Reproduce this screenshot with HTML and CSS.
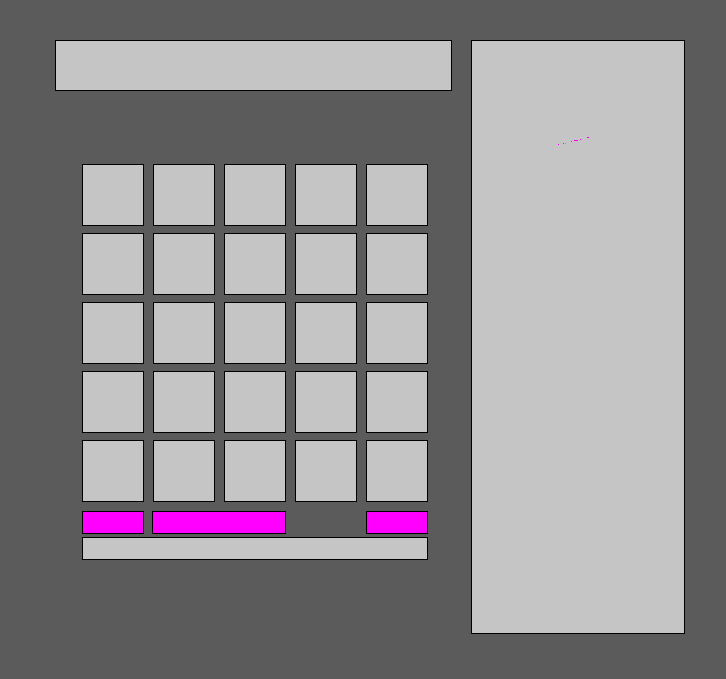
FILE: index.html
```html
<!doctype html>
<html lang="en">

<head>
    <meta charset="utf-8">
    <meta name="viewport" content="width=device-width, initial-scale=1.0">
    <link rel="stylesheet" href="styles.css">
</head>

<body>
    <div class="screen">
        <div class="left">
            <div class="display"></div>

            <div class="pad">
                <div class="cell"></div>
                <div class="cell"></div>
                <div class="cell"></div>
                <div class="cell"></div>
                <div class="cell"></div>
                <div class="cell"></div>
                <div class="cell"></div>
                <div class="cell"></div>
                <div class="cell"></div>
                <div class="cell"></div>
                <div class="cell"></div>
                <div class="cell"></div>
                <div class="cell"></div>
                <div class="cell"></div>
                <div class="cell"></div>
                <div class="cell"></div>
                <div class="cell"></div>
                <div class="cell"></div>
                <div class="cell"></div>
                <div class="cell"></div>
                <div class="cell"></div>
                <div class="cell"></div>
                <div class="cell"></div>
                <div class="cell"></div>
                <div class="cell"></div>
            </div>

            <div class="controls">
                <div class="btn btn_a"></div>
                <div class="btn btn_wide"></div>
                <div class="btn btn_b"></div>
            </div>
            <div class="bar"></div>
        </div>

        <div class="panel">
            <svg class="trace" width="40" height="12" viewBox="0 0 40 12">
                <rect x="2" y="8" width="1" height="1" fill="#ff00ff" />
                <rect x="7" y="7" width="1" height="1" fill="#ff00ff" />
                <rect x="9" y="7" width="1" height="1" fill="#f060f0" />
                <rect x="15" y="5" width="1" height="1" fill="#ff00ff" />
                <rect x="18" y="4" width="4" height="1" fill="#ff00ff" />
                <rect x="24" y="3" width="1" height="1" fill="#ff00ff" />
                <rect x="31" y="1" width="2" height="1" fill="#ff00ff" />
            </svg>
        </div>
    </div>
</body>

</html>
```

FILE: styles.css
```css
* {
    padding: 0;
    margin: 0;
    box-sizing: border-box;
}

html {
    background: #5b5b5b;
    height: 100%;
}

body {
    font-family: "Liberation Sans", sans-serif;
}

.screen {
    display: flex;
    align-items: flex-start;
    padding: 40px 0 0 55px;
    gap: 19px;
}

.left {
    width: 397px;
    display: flex;
    flex-direction: column;
}

.display {
    height: 51px;
    background: #c5c5c5;
    border: 1px solid #000;
}

.pad {
    margin: 73px 0 0 27px;
    width: 346px;
    display: grid;
    grid-template-columns: repeat(5, 62px);
    grid-auto-rows: 62px;
    column-gap: 9px;
    row-gap: 7px;
}

.cell {
    background: #c5c5c5;
    border: 1px solid #000;
}

.controls {
    margin: 9px 0 0 27px;
    width: 346px;
    height: 23px;
    display: flex;
}

.btn {
    background: #ff00ff;
    border: 1px solid #000;
}

.btn_a {
    width: 62px;
}

.btn_wide {
    width: 134px;
    margin-left: 8px;
}

.btn_b {
    width: 62px;
    margin-left: auto;
}

.bar {
    margin: 3px 0 0 27px;
    width: 346px;
    height: 23px;
    background: #c5c5c5;
    border: 1px solid #000;
}

.panel {
    position: relative;
    width: 214px;
    height: 594px;
    background: #c5c5c5;
    border: 1px solid #000;
}

.trace {
    position: absolute;
    left: 84px;
    top: 95px;
}
```
